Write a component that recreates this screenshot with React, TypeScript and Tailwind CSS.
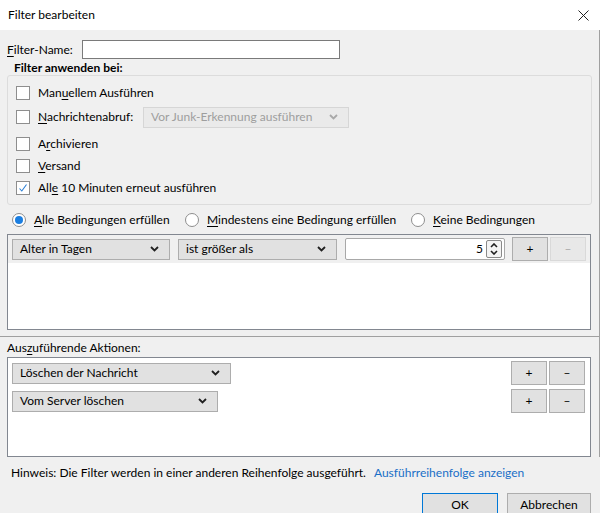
import React from "react"

function U({ children }: { children: React.ReactNode }) {
  return <span className="underline underline-offset-2">{children}</span>
}

function Chevron({ light }: { light?: boolean }) {
  return (
    <svg width="9" height="6" viewBox="0 0 9 6" className="shrink-0">
      <polyline
        points="1,1 4.5,4.5 8,1"
        fill="none"
        stroke={light ? "#a8a8a8" : "#202020"}
        strokeWidth="1.8"
      />
    </svg>
  )
}

function Select({ label, w, disabled }: { label: string; w: string; disabled?: boolean }) {
  return (
    <div
      className={`${w} h-[21px] flex items-center justify-between pl-[7px] pr-[10px] border ${
        disabled
          ? "bg-[#eaeaea] border-[#d6d6d6] text-[#9e9e9e]"
          : "bg-[#e1e1e1] border-[#adadad] text-black"
      }`}
    >
      <span>{label}</span>
      <Chevron light={disabled} />
    </div>
  )
}

function Checkbox({ checked }: { checked?: boolean }) {
  return (
    <div className="w-[14px] h-[14px] bg-white border border-[#8e8e8e] flex items-center justify-center shrink-0">
      {checked && (
        <svg width="10" height="10" viewBox="0 0 10 10">
          <polyline points="1.5,5.5 3.8,8 8.5,1.5" fill="none" stroke="#2b7fd6" strokeWidth="1.1" />
        </svg>
      )}
    </div>
  )
}

function Radio({ checked }: { checked?: boolean }) {
  return (
    <div className="w-[14px] h-[14px] rounded-full bg-white border border-[#8e8e8e] flex items-center justify-center shrink-0">
      {checked && <div className="w-[8px] h-[8px] rounded-full bg-[#1a7ee0]" />}
    </div>
  )
}

function SmallButton({ label, disabled, h }: { label: string; disabled?: boolean; h: string }) {
  return (
    <div
      className={`w-[36px] ${h} border flex items-center justify-center ${
        disabled
          ? "bg-[#e8e8e8] border-[#d9d9d9] text-[#a8a8a8]"
          : "bg-[#e1e1e1] border-[#adadad] text-black"
      }`}
    >
      {label}
    </div>
  )
}

export default function App() {
  return (
    <div
      className="w-[600px] h-[513px] overflow-hidden bg-[#f0f0f0] text-[12px] text-black leading-none"
      style={{ fontFamily: "'Segoe UI', Lato, 'Noto Sans', sans-serif" }}
    >
      {/* title bar */}
      <div className="h-[30px] bg-white flex items-center justify-between pl-[8px] pr-[11px]">
        <span className="text-[12px]">Filter bearbeiten</span>
        <svg width="11" height="11" viewBox="0 0 11 11">
          <path d="M0.5 0.5 L10.5 10.5 M10.5 0.5 L0.5 10.5" stroke="#222" strokeWidth="1" />
        </svg>
      </div>

      {/* upper pane */}
      <div className="h-[307px] border-r border-b border-[#a0a0a0] pl-[7px] pr-[7px]">
        <div className="flex items-center gap-[9px] pt-[10px] h-[29px]">
          <span>
            <U>F</U>ilter-Name:
          </span>
          <div className="w-[258px] h-[19px] bg-white border border-[#7a7a7a]" />
        </div>

        <div className="pl-[7px] pt-[4px] font-bold h-[14px] flex items-center">Filter anwenden bei:</div>
        <div className="mt-[2px] h-[130px] border border-[#dcdcdc] rounded-[3px] pl-[8px] pt-[6px]">
          <div className="h-[22px] flex items-center gap-[8px]">
            <Checkbox />
            <span>
              Man<U>u</U>ellem Ausführen
            </span>
          </div>
          <div className="mt-[2px] h-[22px] flex items-center">
            <Checkbox />
            <span className="ml-[8px] w-[105px]">
              <U>N</U>achrichtenabruf:
            </span>
            <Select label="Vor Junk-Erkennung ausführen" w="w-[206px]" disabled />
          </div>
          <div className="mt-[5px] h-[22px] flex items-center gap-[8px]">
            <Checkbox />
            <span>
              A<U>r</U>chivieren
            </span>
          </div>
          <div className="h-[22px] flex items-center gap-[8px]">
            <Checkbox />
            <span>
              <U>V</U>ersand
            </span>
          </div>
          <div className="h-[22px] flex items-center gap-[8px]">
            <Checkbox checked />
            <span>
              All<U>e</U> 10 Minuten erneut ausführen
            </span>
          </div>
        </div>

        <div className="mt-[4px] h-[22px] flex items-center pl-[5px]">
          <Radio checked />
          <span className="ml-[8px] w-[151px]">
            <U>A</U>lle Bedingungen erfüllen
          </span>
          <Radio />
          <span className="ml-[8px] w-[204px]">
            <U>M</U>indestens eine Bedingung erfüllen
          </span>
          <Radio />
          <span className="ml-[8px]">
            <U>K</U>eine Bedingungen
          </span>
        </div>

        <div className="mt-[3px] w-[584px] h-[96px] border border-[#828790] bg-white">
          <div className="h-[28px] bg-[#f0f0f0] flex items-center pl-[4px] gap-[8px]">
            <Select label="Alter in Tagen" w="w-[158px]" />
            <Select label="ist größer als" w="w-[159px]" />
            <div className="w-[160px] h-[22px] bg-white border border-[#a8a8a8] rounded-[2px] flex items-center justify-end pr-[2px] gap-[3px]">
              <span>5</span>
              <div className="w-[16px] h-[18px] border border-[#8a8a8a] rounded-[2px] bg-[#f4f4f4] flex flex-col items-center justify-center gap-[2px]">
                <svg width="8" height="5" viewBox="0 0 8 5">
                  <polyline points="1,4 4,1 7,4" fill="none" stroke="#202020" strokeWidth="1.6" />
                </svg>
                <svg width="8" height="5" viewBox="0 0 8 5">
                  <polyline points="1,1 4,4 7,1" fill="none" stroke="#202020" strokeWidth="1.6" />
                </svg>
              </div>
            </div>
            <div className="flex gap-[2px] ml-[-1px]">
              <SmallButton label="+" h="h-[24px]" />
              <SmallButton label="–" h="h-[24px]" disabled />
            </div>
          </div>
        </div>
      </div>

      {/* actions */}
      <div className="pl-[7px] border-r border-[#a0a0a0] h-[120px]">
        <div className="h-[20px] flex items-center pt-[2px]">
          Aus<U>z</U>uführende Aktionen:
        </div>
        <div className="w-[584px] h-[100px] border border-[#828790] bg-white pl-[4px] pr-[5px] pt-[3px]">
          <div className="h-[24px] flex items-center justify-between">
            <Select label="Löschen der Nachricht" w="w-[219px]" />
            <div className="flex gap-[2px]">
              <SmallButton label="+" h="h-[24px]" />
              <SmallButton label="–" h="h-[24px]" />
            </div>
          </div>
          <div className="mt-[4px] h-[24px] flex items-center justify-between">
            <Select label="Vom Server löschen" w="w-[206px]" />
            <div className="flex gap-[2px]">
              <SmallButton label="+" h="h-[24px]" />
              <SmallButton label="–" h="h-[24px]" />
            </div>
          </div>
        </div>
      </div>

      <div className="h-[32px] flex items-center pl-[11px]">
        <span>Hinweis: Die Filter werden in einer anderen Reihenfolge ausgeführt.</span>
        <span className="ml-[8px] text-[#1a6fc7]">Ausführreihenfolge anzeigen</span>
      </div>

      <div className="flex justify-end gap-[9px] pr-[9px] pt-[4px]">
        <div className="w-[76px] h-[23px] bg-[#e1e1e1] border border-[#0078d7] flex items-center justify-center">
          OK
        </div>
        <div className="w-[84px] h-[23px] bg-[#e1e1e1] border border-[#adadad] flex items-center justify-center">
          Abbrechen
        </div>
      </div>
    </div>
  )
}
